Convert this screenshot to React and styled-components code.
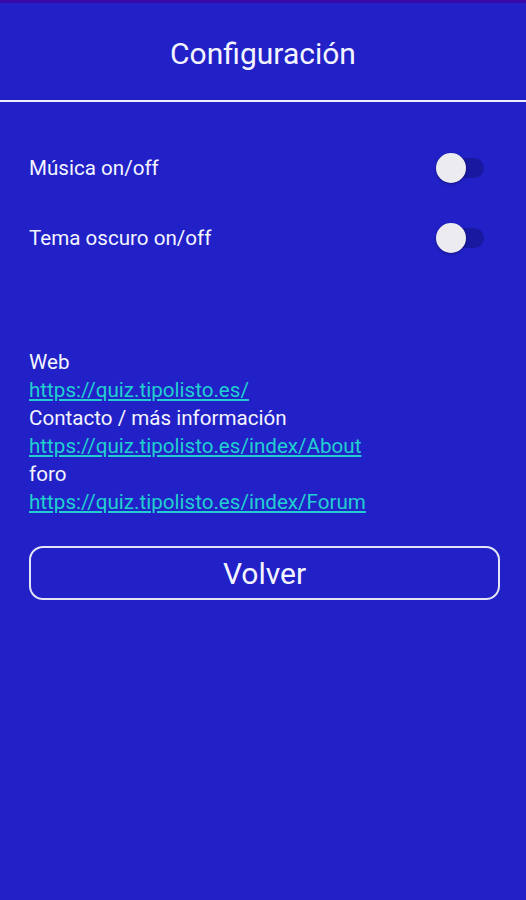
import styled, { createGlobalStyle } from "styled-components";

const GlobalStyle = createGlobalStyle`
  html, body {
    margin: 0;
    padding: 0;
    background: #2121c7;
    font-family: Roboto, "Noto Sans", sans-serif;
  }
`;

const Screen = styled.div`
  min-height: 900px;
  background: #2121c7;
  border-top: 3px solid #3a0aa8;
  box-sizing: border-box;
  color: #f4f4ff;
`;

const Header = styled.header`
  height: 97px;
  display: flex;
  align-items: center;
  justify-content: center;
  border-bottom: 2px solid #eeeefc;
`;

const Title = styled.h1`
  margin: 0;
  font-size: 30px;
  font-weight: 400;
  padding-top: 4px;
`;

const Content = styled.main`
  padding: 31px 27px 0 29px;
`;

const SettingRow = styled.div`
  display: flex;
  align-items: center;
  justify-content: space-between;
  height: 70px;
  font-size: 20.6px;
`;

const Switch = styled.div`
  position: relative;
  width: 48px;
  height: 30px;
  margin-right: 15px;
`;

const Track = styled.div`
  position: absolute;
  left: 4px;
  right: 0;
  top: 5px;
  height: 20px;
  border-radius: 10px;
  background: #1818a0;
`;

const Thumb = styled.div`
  position: absolute;
  left: 0;
  top: 0;
  width: 30px;
  height: 30px;
  border-radius: 50%;
  background: #ebebf0;
  box-shadow: 0 1px 3px rgba(0, 0, 0, 0.35);
`;

const Links = styled.section`
  margin-top: 75px;
  font-size: 20.6px;
  line-height: 28px;
`;

const Line = styled.div`
  color: #f4f4ff;
`;

const Link = styled.a`
  display: block;
  color: #22cfd0;
  text-decoration: underline;
  text-underline-offset: 2px;
`;

const BackButton = styled.button`
  display: block;
  width: 471px;
  height: 54px;
  margin-top: 30px;
  background: transparent;
  border: 2px solid #e4e4f6;
  border-radius: 14px;
  color: #f4f4ff;
  font-family: Roboto, sans-serif;
  font-size: 30px;
  font-weight: 400;
  cursor: pointer;
`;

const Toggle = () => (
  <Switch>
    <Track />
    <Thumb />
  </Switch>
);

export default function App() {
  return (
    <Screen>
      <GlobalStyle />
      <Header>
        <Title>Configuración</Title>
      </Header>
      <Content>
        <SettingRow>
          <span>Música on/off</span>
          <Toggle />
        </SettingRow>
        <SettingRow>
          <span>Tema oscuro on/off</span>
          <Toggle />
        </SettingRow>
        <Links>
          <Line>Web</Line>
          <Link href="#">https://quiz.tipolisto.es/</Link>
          <Line>Contacto / más información</Line>
          <Link href="#">https://quiz.tipolisto.es/index/About</Link>
          <Line>foro</Line>
          <Link href="#">https://quiz.tipolisto.es/index/Forum</Link>
        </Links>
        <BackButton>Volver</BackButton>
      </Content>
    </Screen>
  );
}
